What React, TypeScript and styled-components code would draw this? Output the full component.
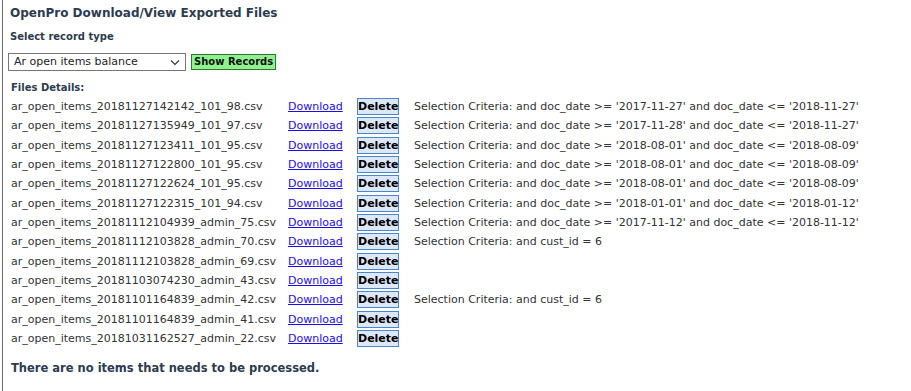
import React from "react";
import styled, { createGlobalStyle } from "styled-components";

const Global = createGlobalStyle`
  html, body { margin: 0; padding: 0; background: #fff; }
  body { font-family: "DejaVu Sans", Verdana, sans-serif; color: #333; }
`;

const Page = styled.div`
  margin-left: 2px;
  border-left: 1px solid #6a6a6a;
  min-height: 391px;
  box-sizing: border-box;
  padding: 4px 0 0 7px;
`;

const Title = styled.h1`
  margin: 0;
  font-size: 12px;
  line-height: 18px;
  font-weight: bold;
  color: #2d3b4f;
`;

const Label = styled.div`
  margin-top: 8px;
  font-size: 10px;
  line-height: 14px;
  font-weight: bold;
  color: #2d3b4f;
`;

const FormRow = styled.div`
  display: flex;
  align-items: center;
  gap: 5px;
  margin-top: 9px;
  margin-left: -2px;
`;

const SelectBox = styled.div`
  position: relative;
  width: 178px;
  height: 18px;
  box-sizing: border-box;
  border: 1px solid #767676;
  background: #fff;
  font-size: 11px;
  line-height: 16px;
  color: #222;
  padding-left: 5px;
`;

const Chevron = styled.svg`
  position: absolute;
  right: 5px;
  top: 5px;
`;

const ShowButton = styled.button`
  height: 16px;
  box-sizing: border-box;
  padding: 0 2px;
  border: 1px solid #2b7a2b;
  background: #8ff28f;
  font-family: "DejaVu Sans", Verdana, sans-serif;
  font-size: 10px;
  font-weight: bold;
  line-height: 14px;
  color: #111;
`;

const SubLabel = styled(Label)`
  margin-top: 10px;
  margin-left: 1px;
`;

const FileGrid = styled.div`
  display: grid;
  grid-template-columns: 277px 69px 57px 1fr;
  grid-auto-rows: 19.33px;
  align-items: center;
  margin-top: 2px;
  margin-left: 1px;
  font-size: 11px;
`;

const FileName = styled.span`
  color: #333;
  white-space: nowrap;
`;

const DownloadLink = styled.a`
  color: #1a0dee;
  text-decoration: underline;
  cursor: pointer;
`;

const DeleteButton = styled.button`
  width: 42px;
  height: 17px;
  box-sizing: border-box;
  padding: 0;
  border: 1px solid #4a86d0;
  background: #dde8f7;
  font-family: "DejaVu Sans", Verdana, sans-serif;
  font-size: 11px;
  font-weight: bold;
  line-height: 15px;
  color: #000;
`;

const Criteria = styled.span`
  color: #333;
  white-space: nowrap;
`;

const Message = styled.div`
  margin-top: 11px;
  margin-left: 1px;
  font-size: 11.5px;
  line-height: 18px;
  font-weight: bold;
  color: #2d3b4f;
`;

const files: [string, string][] = [
  ["ar_open_items_20181127142142_101_98.csv", "Selection Criteria: and doc_date >= '2017-11-27' and doc_date <= '2018-11-27'"],
  ["ar_open_items_20181127135949_101_97.csv", "Selection Criteria: and doc_date >= '2017-11-28' and doc_date <= '2018-11-27'"],
  ["ar_open_items_20181127123411_101_95.csv", "Selection Criteria: and doc_date >= '2018-08-01' and doc_date <= '2018-08-09'"],
  ["ar_open_items_20181127122800_101_95.csv", "Selection Criteria: and doc_date >= '2018-08-01' and doc_date <= '2018-08-09'"],
  ["ar_open_items_20181127122624_101_95.csv", "Selection Criteria: and doc_date >= '2018-08-01' and doc_date <= '2018-08-09'"],
  ["ar_open_items_20181127122315_101_94.csv", "Selection Criteria: and doc_date >= '2018-01-01' and doc_date <= '2018-01-12'"],
  ["ar_open_items_20181112104939_admin_75.csv", "Selection Criteria: and doc_date >= '2017-11-12' and doc_date <= '2018-11-12'"],
  ["ar_open_items_20181112103828_admin_70.csv", "Selection Criteria: and cust_id = 6"],
  ["ar_open_items_20181112103828_admin_69.csv", ""],
  ["ar_open_items_20181103074230_admin_43.csv", ""],
  ["ar_open_items_20181101164839_admin_42.csv", "Selection Criteria: and cust_id = 6"],
  ["ar_open_items_20181101164839_admin_41.csv", ""],
  ["ar_open_items_20181031162527_admin_22.csv", ""],
];

export default function App() {
  return (
    <>
      <Global />
      <Page>
        <Title>OpenPro Download/View Exported Files</Title>
        <Label>Select record type</Label>
        <FormRow>
          <SelectBox>
            Ar open items balance
            <Chevron width="10" height="7" viewBox="0 0 10 7">
              <path d="M1 1.5 L5 5.5 L9 1.5" fill="none" stroke="#333" strokeWidth="1.1" />
            </Chevron>
          </SelectBox>
          <ShowButton>Show Records</ShowButton>
        </FormRow>
        <SubLabel>Files Details:</SubLabel>
        <FileGrid>
          {files.map(([name, crit]) => (
            <React.Fragment key={name}>
              <FileName>{name}</FileName>
              <span>
                <DownloadLink>Download</DownloadLink>
              </span>
              <span>
                <DeleteButton>Delete</DeleteButton>
              </span>
              <Criteria>{crit}</Criteria>
            </React.Fragment>
          ))}
        </FileGrid>
        <Message>There are no items that needs to be processed.</Message>
      </Page>
    </>
  );
}
